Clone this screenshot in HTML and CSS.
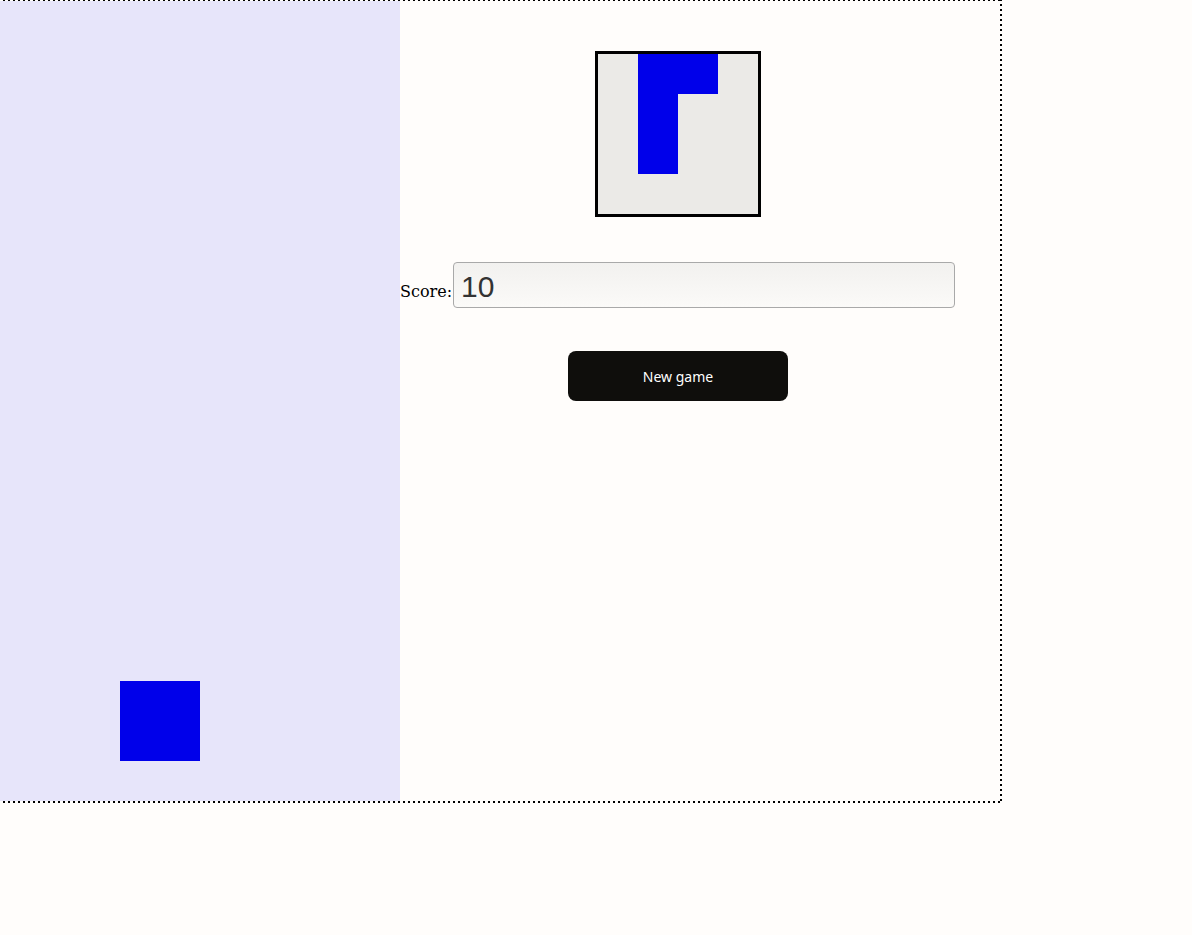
FILE: index.html
```html
<!DOCTYPE html>
<html>
<head>
<meta charset="utf-8">
<title>Tetris</title>
<link rel="stylesheet" href="styles.css">
</head>
<body>
<div class="game">
  <div class="board">
    <div class="block"></div>
  </div>
  <div class="side">
    <div class="preview">
      <div class="cell c1r1"></div>
      <div class="cell c1r2"></div>
      <div class="cell c1r3"></div>
      <div class="cell c2r1"></div>
    </div>
    <div class="score-row">
      <label class="score-label" for="score">Score:</label>
      <input class="score-input" id="score" type="text" value="10" readonly>
    </div>
    <button class="new-game" type="button">New game</button>
  </div>
</div>
</body>
</html>
```
FILE: styles.css
```css
html, body {
  margin: 0;
  padding: 0;
  background: #fffdfb;
}

body {
  font-family: "DejaVu Serif", serif;
  font-size: 16px;
  color: #000;
}

.game {
  display: flex;
  width: 1000px;
  height: 800px;
  padding: 2px;
  margin: -1px 0 0 -2px;
  background:
    repeating-linear-gradient(90deg, #000 0 2px, transparent 2px 5px) top left / 100% 2px no-repeat,
    repeating-linear-gradient(90deg, #000 0 2px, transparent 2px 5px) bottom left / 100% 2px no-repeat,
    repeating-linear-gradient(180deg, #000 0 2px, transparent 2px 5px) top left / 2px 100% no-repeat,
    repeating-linear-gradient(180deg, #000 0 2px, transparent 2px 5px) top right / 2px 100% no-repeat;
  background-origin: border-box;
}

.board {
  position: relative;
  width: 400px;
  height: 800px;
  background: #e7e5fa;
  flex: none;
}

.block {
  position: absolute;
  left: 120px;
  top: 680px;
  width: 80px;
  height: 80px;
  background: #0000ea;
}

.side {
  width: 556px;
  display: flex;
  flex-direction: column;
  align-items: center;
  padding-top: 50px;
}

.preview {
  width: 160px;
  height: 160px;
  border: 3px solid #000;
  background: #ebeae7;
  display: grid;
  grid-template-columns: repeat(4, 40px);
  grid-template-rows: repeat(4, 40px);
}

.cell {
  background: #0000ea;
}

.c1r1 { grid-column: 2; grid-row: 1; }
.c1r2 { grid-column: 2; grid-row: 2; }
.c1r3 { grid-column: 2; grid-row: 3; }
.c2r1 { grid-column: 3; grid-row: 1; }

.score-row {
  margin-top: 45px;
  align-self: stretch;
  display: flex;
  align-items: baseline;
}

.score-label {
  font-family: "DejaVu Serif", serif;
  font-size: 16px;
  margin-right: 1px;
}

.score-input {
  width: 502px;
  height: 46px;
  box-sizing: border-box;
  border: 1px solid #a9a9a9;
  border-radius: 4px;
  padding: 4px 7px 0;
  font-family: "Liberation Sans", Arial, sans-serif;
  font-size: 30px;
  color: #333;
  background: linear-gradient(#f2f1ef, #fbfaf8);
  outline: none;
}

.new-game {
  margin-top: 43px;
  width: 220px;
  height: 50px;
  border: none;
  border-radius: 8px;
  background: #0f0e0c;
  color: #fff;
  font-family: "Noto Sans", sans-serif;
  font-size: 14px;
  cursor: pointer;
}
```
